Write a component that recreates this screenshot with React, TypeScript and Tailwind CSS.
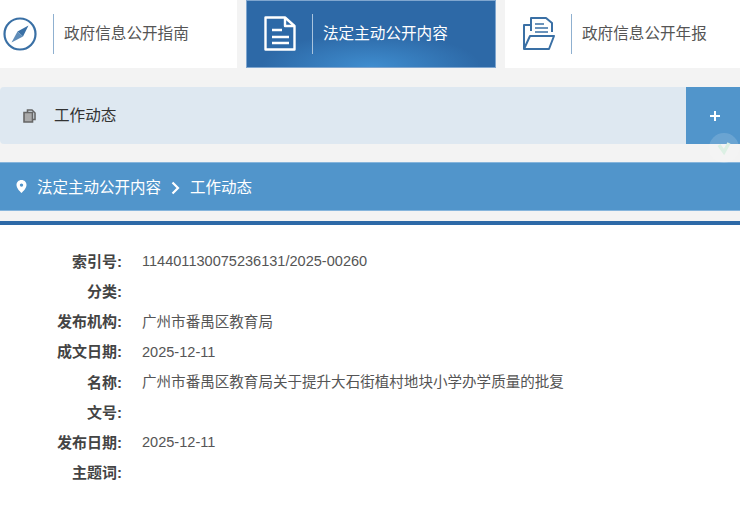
const FONT = "font-['Liberation_Sans','Noto_Sans_CJK_SC',sans-serif]";

const fields = [
  { label: "索引号:", value: "114401130075236131/2025-00260" },
  { label: "分类:", value: "" },
  { label: "发布机构:", value: "广州市番禺区教育局" },
  { label: "成文日期:", value: "2025-12-11" },
  { label: "名称:", value: "广州市番禺区教育局关于提升大石街植村地块小学办学质量的批复" },
  { label: "文号:", value: "" },
  { label: "发布日期:", value: "2025-12-11" },
  { label: "主题词:", value: "" },
];

function CompassIcon() {
  return (
    <svg width="34" height="34" viewBox="0 0 34 34" fill="none">
      <circle cx="17" cy="17" r="15.5" stroke="#3a70a5" strokeWidth="2.2" />
      <path d="M25.5 8.5 L20 19.5 L14.5 14.5 Z" fill="#3a70a5" />
      <path d="M8.5 25.5 L14.5 14.5 L20 19.5 Z" fill="#5f8cb8" />
    </svg>
  );
}

function DocIcon() {
  return (
    <svg width="32" height="36" viewBox="0 0 32 36" fill="none" stroke="#fff" strokeWidth="2.4">
      <path d="M1.5 1.5 H21 L30.5 10 V33.5 H1.5 Z" strokeLinejoin="round" />
      <path d="M21 1.5 V10 H30.5" strokeLinejoin="round" />
      <path d="M8 14 H18 M8 21 H25 M8 27 H25" />
    </svg>
  );
}

function FolderIcon() {
  return (
    <svg width="34" height="36" viewBox="0 0 34 36" fill="none" stroke="#3a70a5" strokeWidth="2">
      <path d="M9 15 V2 H24 L30 7 V16" strokeLinejoin="round" />
      <path d="M13 8 H22 M13 12 H26 M13 16 H26" strokeWidth="1.6" />
      <path d="M9 9 H2 V33 H27 L32 20 H8 L2 33" strokeLinejoin="round" />
    </svg>
  );
}

function Tab({ icon, text, active }: { icon: React.ReactNode; text: string; active?: boolean }) {
  return (
    <div
      className={`flex h-[68px] items-center ${
        active
          ? "border border-[#7fa6cf] bg-[radial-gradient(ellipse_110px_34px_at_50%_100%,#3f8dcf_0%,#2d69a7_100%)]"
          : "bg-white"
      }`}
    >
      {icon}
      <div className={`h-10 w-px ${active ? "bg-[#a9c4de]" : "bg-[#8fb0d0]"}`} />
      <span className={`ml-[10px] text-[15.6px] ${active ? "text-white" : "text-[#555]"}`}>{text}</span>
    </div>
  );
}

export default function App() {
  return (
    <div className={`relative h-[520px] w-[740px] overflow-hidden bg-white ${FONT}`}>
      <div className="bg-[#f3f3f3] pb-[19px]">
        <div className="grid grid-cols-[237px_250px_1fr] gap-x-[9px]">
          <Tab
            text="政府信息公开指南"
            icon={<div className="ml-[3px] mr-[16px] flex w-[34px] justify-center"><CompassIcon /></div>}
          />
          <Tab
            active
            text="法定主动公开内容"
            icon={<div className="ml-[17px] mr-[16px] flex w-[32px] justify-center"><DocIcon /></div>}
          />
          <Tab
            text="政府信息公开年报"
            icon={<div className="ml-[17px] mr-[15px] flex w-[34px] justify-center"><FolderIcon /></div>}
          />
        </div>
      </div>

      <div className="bg-[#f3f3f3] pb-[18px]">
        <div className="flex h-[57px] items-center rounded-l bg-[#dee8f1] pl-[23px]">
          <svg width="13" height="14" viewBox="0 0 13 14" fill="none" stroke="#666" strokeWidth="1.6">
            <path d="M4.5 3 V1 H9 L12 4 V10.5 H10" />
            <path d="M1 3.5 H9.5 V13 H1 Z" fill="#aaa" />
          </svg>
          <span className="ml-[18px] flex-1 text-[15.6px] text-[#333]">工作动态</span>
          <div className="flex h-full w-[54px] items-center justify-center bg-[#5195cb] pl-[4px]">
            <svg width="10" height="10" viewBox="0 0 10 10" stroke="#fff" strokeWidth="2">
              <path d="M0 5 H10 M5 0 V10" />
            </svg>
          </div>
        </div>
      </div>

      <div className="flex h-[49px] items-center border-y border-[#86b5dc] bg-[#5195cb] pl-4 pt-[2px] text-white">
        <svg className="-mt-[2px]" width="11" height="13" viewBox="0 0 11 13" fill="#fff">
          <path fillRule="evenodd" d="M5.5 0 C8.5 0 10.5 2.2 10.5 5 C10.5 8 7.5 11 5.5 13 C3.5 11 .5 8 .5 5 C.5 2.2 2.5 0 5.5 0 Z M5.5 3.4 A1.7 1.7 0 1 0 5.5 6.8 A1.7 1.7 0 1 0 5.5 3.4 Z" />
        </svg>
        <span className="ml-[10px] text-[15.5px]">法定主动公开内容</span>
        <svg className="mx-[10px]" width="9" height="14" viewBox="0 0 9 14" fill="none" stroke="#fff" strokeWidth="2.2">
          <path d="M1.5 1.5 L7 7 L1.5 12.5" />
        </svg>
        <span className="text-[15.5px]">工作动态</span>
      </div>

      <div className="h-[14px] border-b-[4px] border-[#2d69a7] bg-[#f3f3f3]" />

      <div className="flex flex-col pt-[22px]">
        {fields.map((f) => (
          <div key={f.label} className="flex h-[30.2px] items-center text-[14.56px]">
            <div className="w-[122px] text-right text-[15px] font-bold text-[#444]">{f.label}</div>
            <div className="ml-5 text-[#555]">{f.value}</div>
          </div>
        ))}
      </div>

      {/* floating round badge over the right edge */}
      <div className="absolute left-[709px] top-[133px] flex h-[30px] w-[30px] items-center justify-center rounded-full bg-white/15">
        <svg width="14" height="16" viewBox="0 0 14 16" fill="none" stroke="#dcf0e4" strokeWidth="3.5">
          <path d="M2 5 L7 12 L12 3" />
        </svg>
      </div>
    </div>
  );
}
